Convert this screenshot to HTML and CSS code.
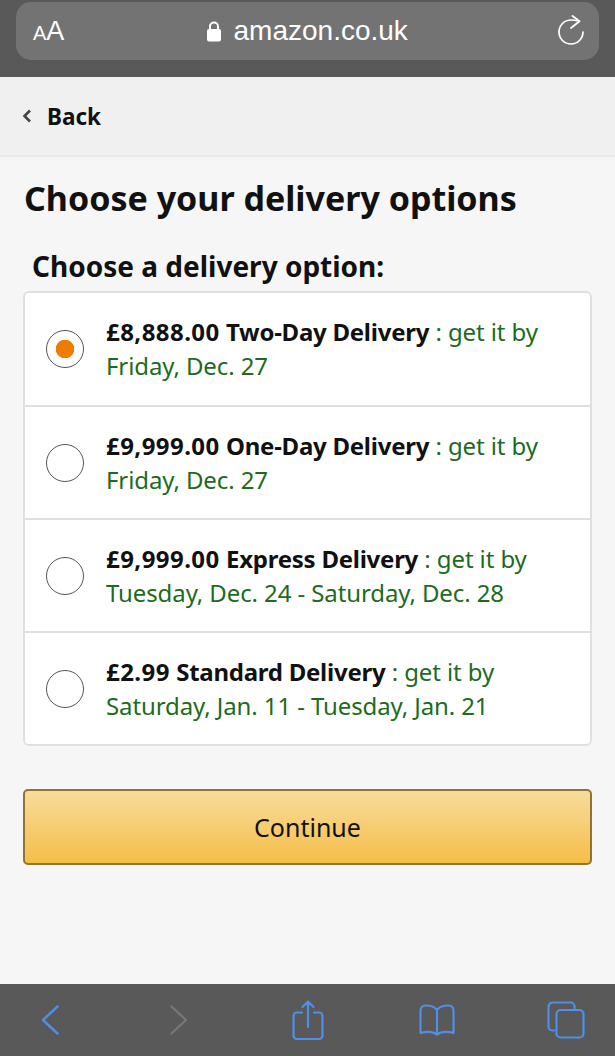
FILE: index.html
```html
<!DOCTYPE html>
<html lang="en">
<head>
<meta charset="utf-8">
<title>Choose your delivery options</title>
<link rel="stylesheet" href="styles.css">
</head>
<body>
<div class="page">
  <header class="browser-top">
    <div class="url-bar">
      <span class="aa"><span class="aa-small">A</span>A</span>
      <span class="address">
        <svg class="lock" viewBox="0 0 16 22" width="16" height="22"><path d="M4 10V6.500a4 4 0 0 1 8 0V10" fill="none" stroke="#fff" stroke-width="2"/><rect x="1" y="9" width="14" height="12.500" rx="2" fill="#fff"/></svg>
        <span>amazon.co.uk</span>
      </span>
      <svg class="reload" viewBox="0 0 28 32" width="28" height="32"><path d="M21 6C17 5.200 15 5 13 5A12 12 0 1 0 25 17" fill="none" stroke="#fff" stroke-width="1.700" stroke-linecap="round"/><path d="M14.500 1L21.500 6.300L13 13" fill="none" stroke="#fff" stroke-width="1.800" stroke-linecap="round" stroke-linejoin="round"/></svg>
    </div>
  </header>
  <nav class="subnav">
    <svg class="back-chevron" viewBox="0 0 10 14" width="10" height="14"><path d="M8 1.500L2.500 7L8 12.500" fill="none" stroke="#444" stroke-width="2.600"/></svg>
    <span class="back-label">Back</span>
  </nav>
  <main class="content">
    <h1>Choose your delivery options</h1>
    <h2>Choose a delivery option:</h2>
    <div class="options">
      <div class="option">
        <span class="radio radio-on"></span>
        <p><b><span class="price">£8,888.00</span> <span class="speed">Two-Day Delivery</span></b> <span class="green">: get it by<br>Friday, Dec. 27</span></p>
      </div>
      <div class="option">
        <span class="radio"></span>
        <p><b><span class="price">£9,999.00</span> <span class="speed">One-Day Delivery</span></b> <span class="green">: get it by<br>Friday, Dec. 27</span></p>
      </div>
      <div class="option">
        <span class="radio"></span>
        <p><b><span class="price">£9,999.00</span> <span class="speed">Express Delivery</span></b> <span class="green">: get it by<br>Tuesday, Dec. 24 - Saturday, Dec. 28</span></p>
      </div>
      <div class="option">
        <span class="radio"></span>
        <p><b><span class="price">£2.99</span> <span class="speed">Standard Delivery</span></b> <span class="green">: get it by<br>Saturday, Jan. 11 - Tuesday, Jan. 21</span></p>
      </div>
    </div>
    <button class="continue" type="button">Continue</button>
  </main>
  <footer class="browser-bottom">
    <svg viewBox="0 0 18 30" width="18" height="30"><path d="M16.500 1.500L2 15L16.500 28.500" fill="none" stroke="#4f8fe6" stroke-width="2.400" stroke-linecap="round" stroke-linejoin="round"/></svg>
    <svg viewBox="0 0 18 30" width="18" height="30"><path d="M1.500 1.500L16 15L1.500 28.500" fill="none" stroke="#777" stroke-width="2.200" stroke-linecap="round" stroke-linejoin="round"/></svg>
    <svg viewBox="0 0 32 40" width="32" height="40"><path d="M10 12.500H5a3.500 3.500 0 0 0-3.500 3.500v19.500a3.500 3.500 0 0 0 3.500 3.500h22a3.500 3.500 0 0 0 3.500-3.500V16a3.500 3.500 0 0 0-3.500-3.500h-5M16 27V1.500M10.500 7L16 1.500L21.500 7" fill="none" stroke="#4f8fe6" stroke-width="2.200" stroke-linecap="round" stroke-linejoin="round"/></svg>
    <svg viewBox="0 0 38 32" width="38" height="32"><path d="M19 6C16.500 2.500 12.500 1.500 8 1.500C4 1.500 2.500 3.500 2.500 7V29C8 27.500 15 27.500 19 30.500C23 27.500 30 27.500 35.500 29V7C35.500 3.500 34 1.500 30 1.500C25.500 1.500 21.500 2.500 19 6ZM19 6V30.500" fill="none" stroke="#4f8fe6" stroke-width="2.200" stroke-linejoin="round"/></svg>
    <svg viewBox="0 0 38 38" width="38" height="38"><path d="M8 29.500H5.500a4 4 0 0 1-4-4V5.500a4 4 0 0 1 4-4h18a4 4 0 0 1 4 4V9" fill="none" stroke="#4f8fe6" stroke-width="2.200"/><rect x="9.500" y="9" width="27" height="27.500" rx="4" fill="none" stroke="#4f8fe6" stroke-width="2.200"/></svg>
  </footer>
</div>
</body>
</html>
```

FILE: styles.css
```css
* { box-sizing: border-box; }
html, body { margin: 0; padding: 0; }
body { font-family: "Noto Sans", "Liberation Sans", sans-serif; background: #f6f6f6; }
.page { width: 615px; height: 1056px; display: flex; flex-direction: column; overflow: hidden; }
.browser-top { height: 77px; background: #595959; padding: 2px 16px 0; flex: none; }
.url-bar { height: 58px; border-radius: 15px; background: #737373; color: #fff; display: flex; align-items: center; justify-content: space-between; padding: 0 13px 0 17px; }
.aa { font-size: 27px; line-height: 1; font-family: "Liberation Sans", sans-serif; }
.aa-small { font-size: 20px; }
.address { display: flex; align-items: center; gap: 12px; font-size: 28px; font-family: "Liberation Sans", sans-serif; margin-left: -9px; }
.lock { display: block; }
.reload { display: block; }
.subnav { height: 80px; background: #f0f0f0; border-bottom: 2px solid #e8e8e8; display: flex; align-items: center; gap: 15px; padding-left: 22px; flex: none; }
.back-chevron { display: block; }
.back-label { font-size: 22.5px; font-weight: 700; color: #111; }
.content { flex: 1; padding: 0 23px; }
h1 { margin: 18px 0 0 1px; font-size: 34px; line-height: 46px; font-weight: 700; color: #111; }
h2 { margin: 26px 0 0 9px; font-size: 28px; line-height: 38px; font-weight: 700; color: #111; }
.options { margin-top: 6px; background: #fff; border: 2px solid #e0e0e0; border-radius: 6px; }
.option { height: 113px; display: flex; align-items: center; gap: 22px; padding: 0 21px; border-top: 2px solid #e0e0e0; }
.option:first-child { border-top: 0; height: 112px; }
.option p { margin: 0; font-size: 24px; line-height: 34px; color: #111; }
.option b { font-weight: 700; }
.price { letter-spacing: 0.45px; }
.speed { letter-spacing: -0.25px; }
.green { color: #1d6b1d; letter-spacing: -0.1px; }
.radio { width: 38px; height: 38px; flex: none; border-radius: 50%; border: 1.5px solid #555; background: #fff; display: block; }
.radio-on { background: radial-gradient(circle, #ef7c00 0 9px, #fff 9.5px); }
.continue { display: block; width: 569px; height: 76px; margin-top: 43px; border: 2px solid #8f7434; border-radius: 5px; background: linear-gradient(#f8dc9c, #f5be47); font: 400 25px "Noto Sans", sans-serif; color: #111; }
.browser-bottom { height: 72px; background: #595959; flex: none; display: grid; grid-template-columns: repeat(5, 129px); justify-content: center; justify-items: center; align-items: center; }
```
